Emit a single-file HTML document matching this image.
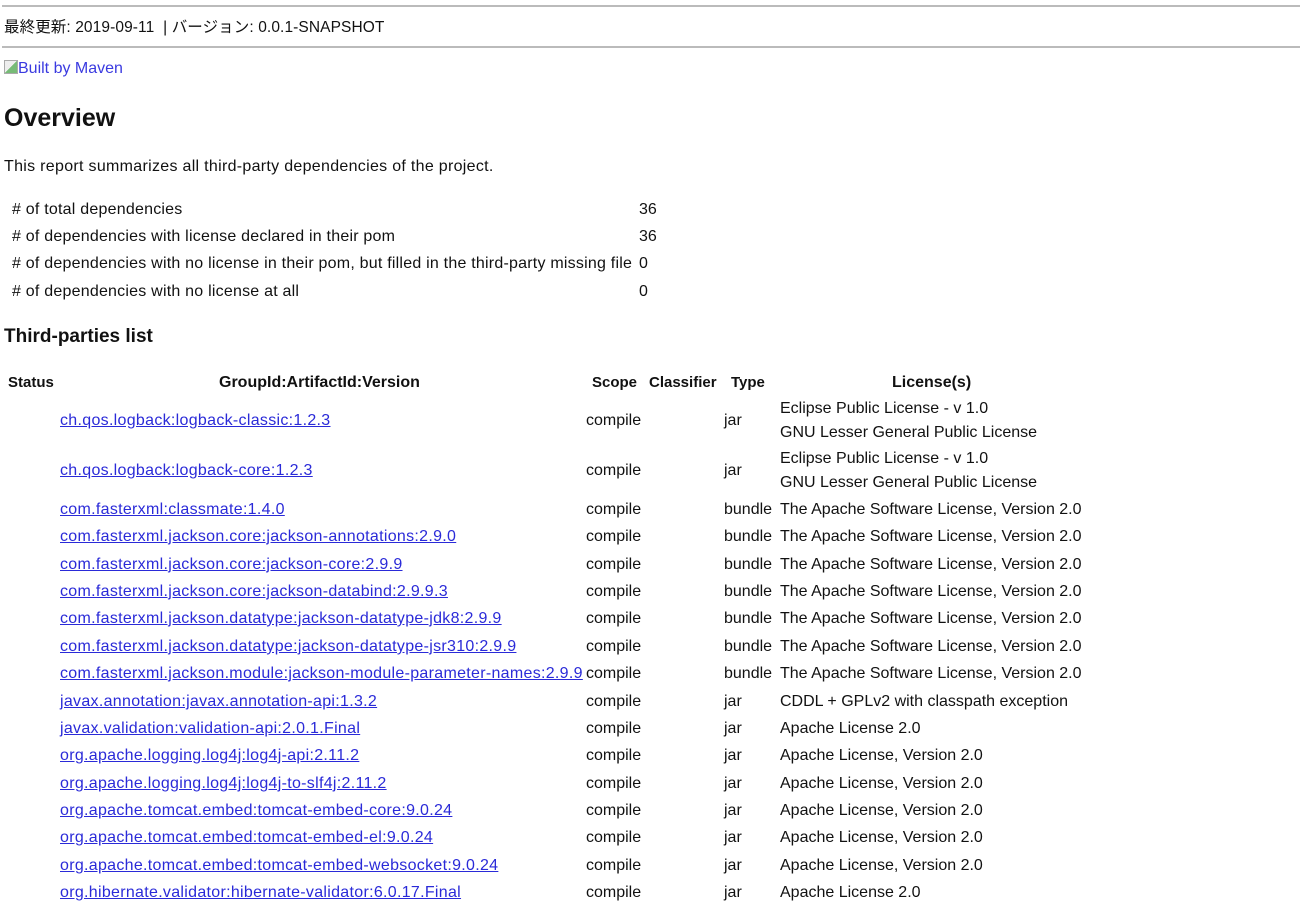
<!DOCTYPE html>
<html><head><meta charset="utf-8">
<style>
body{margin:0;width:1300px;height:908px;overflow:hidden;background:#fff;font-family:"Liberation Sans","Noto Sans CJK JP",sans-serif;font-size:16px;color:#111;position:relative}
.a{position:absolute;white-space:nowrap;line-height:20px}
.w{letter-spacing:0.3px}
.o{letter-spacing:0.22px}
.hr{position:absolute;left:2px;right:0;height:2px;background:#bbb}
a{color:#2a2ad8;text-decoration:underline}
</style></head><body>
<div class="hr" style="top:5px"></div>
<div class="a" style="left:4px;top:18px;font-size:15.5px;letter-spacing:0.1px">最終更新: 2019-09-11 &nbsp;| バージョン: 0.0.1-SNAPSHOT</div>
<div class="hr" style="top:46px"></div>
<div class="a" style="left:4px;top:59px"><span style="display:inline-block;width:12px;height:12px;border:1px solid #aaa;background:linear-gradient(135deg,#eee 50%,#7b7 50%);vertical-align:-1px"></span><a style="text-decoration:none;color:#3a3ae0">Built by Maven</a></div>
<div class="a" style="left:4px;top:103px;font-size:25px;line-height:30px;font-weight:bold">Overview</div>
<div class="a w" style="left:4px;top:157px">This report summarizes all third-party dependencies of the project.</div>
<div class="a o" style="left:12px;top:200px"># of total dependencies</div><div class="a" style="left:639px;top:200px">36</div>
<div class="a o" style="left:12px;top:227px"># of dependencies with license declared in their pom</div><div class="a" style="left:639px;top:227px">36</div>
<div class="a o" style="left:12px;top:254px"># of dependencies with no license in their pom, but filled in the third-party missing file</div><div class="a" style="left:639px;top:254px">0</div>
<div class="a o" style="left:12px;top:282px"># of dependencies with no license at all</div><div class="a" style="left:639px;top:282px">0</div>
<div class="a" style="left:4px;top:326px;font-size:19px;line-height:22px;font-weight:bold">Third-parties list</div>
<div class="a" style="left:8px;top:373px;font-size:15px;font-weight:bold">Status</div>
<div class="a" style="left:219px;top:373px;font-weight:bold">GroupId:ArtifactId:Version</div>
<div class="a" style="left:592px;top:373px;font-size:15px;font-weight:bold">Scope</div>
<div class="a" style="left:649px;top:373px;font-size:15px;font-weight:bold">Classifier</div>
<div class="a" style="left:731px;top:373px;font-size:15px;font-weight:bold">Type</div>
<div class="a" style="left:892px;top:373px;font-weight:bold">License(s)</div>
<div id="rows"></div>
<script>
var R=[
[421,"ch.qos.logback:logback-classic:1.2.3","jar",["Eclipse Public License - v 1.0","GNU Lesser General Public License"]],
[471,"ch.qos.logback:logback-core:1.2.3","jar",["Eclipse Public License - v 1.0","GNU Lesser General Public License"]],
[510,"com.fasterxml:classmate:1.4.0","bundle",["The Apache Software License, Version 2.0"]],
[537,"com.fasterxml.jackson.core:jackson-annotations:2.9.0","bundle",["The Apache Software License, Version 2.0"]],
[565,"com.fasterxml.jackson.core:jackson-core:2.9.9","bundle",["The Apache Software License, Version 2.0"]],
[592,"com.fasterxml.jackson.core:jackson-databind:2.9.9.3","bundle",["The Apache Software License, Version 2.0"]],
[619,"com.fasterxml.jackson.datatype:jackson-datatype-jdk8:2.9.9","bundle",["The Apache Software License, Version 2.0"]],
[647,"com.fasterxml.jackson.datatype:jackson-datatype-jsr310:2.9.9","bundle",["The Apache Software License, Version 2.0"]],
[674,"com.fasterxml.jackson.module:jackson-module-parameter-names:2.9.9","bundle",["The Apache Software License, Version 2.0"]],
[702,"javax.annotation:javax.annotation-api:1.3.2","jar",["CDDL + GPLv2 with classpath exception"]],
[729,"javax.validation:validation-api:2.0.1.Final","jar",["Apache License 2.0"]],
[756,"org.apache.logging.log4j:log4j-api:2.11.2","jar",["Apache License, Version 2.0"]],
[784,"org.apache.logging.log4j:log4j-to-slf4j:2.11.2","jar",["Apache License, Version 2.0"]],
[811,"org.apache.tomcat.embed:tomcat-embed-core:9.0.24","jar",["Apache License, Version 2.0"]],
[838,"org.apache.tomcat.embed:tomcat-embed-el:9.0.24","jar",["Apache License, Version 2.0"]],
[866,"org.apache.tomcat.embed:tomcat-embed-websocket:9.0.24","jar",["Apache License, Version 2.0"]],
[893,"org.hibernate.validator:hibernate-validator:6.0.17.Final","jar",["Apache License 2.0"]]];
var h="";
R.forEach(function(r){var t=r[0]-10,s='class="a" style="top:';
h+='<div class="a w" style="top:'+t+'px;left:60px"><a>'+r[1]+'</a></div>';
h+='<div '+s+t+'px;left:586px">compile</div>';
h+='<div '+s+t+'px;left:724px">'+r[2]+'</div>';
if(r[3].length==2){h+='<div '+s+(t-12)+'px;left:780px">'+r[3][0]+'</div><div '+s+(t+12)+'px;left:780px">'+r[3][1]+'</div>';}
else h+='<div '+s+t+'px;left:780px">'+r[3][0]+'</div>';});
document.getElementById("rows").innerHTML=h;
</script>
</body></html>
